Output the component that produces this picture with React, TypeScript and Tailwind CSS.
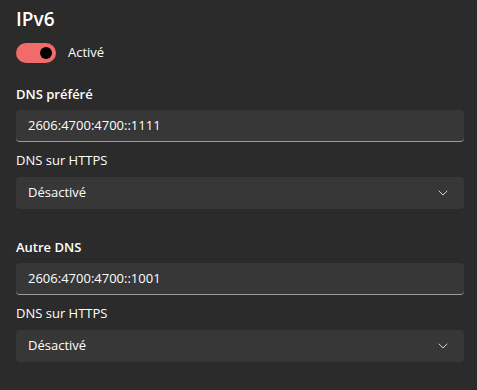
import React from "react";

const Chevron = () => (
  <svg width="10" height="10" viewBox="0 0 10 10" fill="none">
    <path d="M1 3L5 7L9 3" stroke="#d4d4d4" strokeWidth="1" strokeLinecap="round" strokeLinejoin="round" />
  </svg>
);

const TextBox = ({ value }: { value: string }) => (
  <div className="h-8 w-[448px] rounded-[4px] bg-[#373737] border-b border-[#9a9a9a] flex items-center px-3 text-[13px] text-white">
    {value}
  </div>
);

const Select = ({ value }: { value: string }) => (
  <div className="h-8 w-[448px] rounded-[4px] bg-[#373737] flex items-center justify-between pl-3 pr-[16px] text-[13px] text-white">
    <span>{value}</span>
    <Chevron />
  </div>
);

const DnsBlock = ({ title, address }: { title: string; address: string }) => (
  <div>
    <div className="text-[13px] font-semibold leading-5">{title}</div>
    <div className="mt-[6px]">
      <TextBox value={address} />
    </div>
    <div className="mt-2 text-[13px] leading-5">DNS sur HTTPS</div>
    <div className="mt-[7px]">
      <Select value="Désactivé" />
    </div>
  </div>
);

export default function App() {
  return (
    <div
      className="w-[477px] h-[390px] bg-[#2b2b2b] text-white px-4 pt-[5px]"
      style={{ fontFamily: '"Segoe UI", "Open Sans", sans-serif' }}
    >
      <h1 className="text-[19px] font-semibold leading-7">IPv6</h1>
      <div className="mt-[9px] flex items-center gap-3 h-[21px]">
        <div className="w-10 h-5 rounded-full bg-[#f26b6b] flex items-center justify-end pr-1">
          <div className="w-3 h-3 rounded-full bg-black" />
        </div>
        <span className="text-[13px]">Activé</span>
      </div>
      <div className="mt-[21px]">
        <DnsBlock title="DNS préféré" address="2606:4700:4700::1111" />
      </div>
      <div className="mt-[28px]">
        <DnsBlock title="Autre DNS" address="2606:4700:4700::1001" />
      </div>
    </div>
  );
}
